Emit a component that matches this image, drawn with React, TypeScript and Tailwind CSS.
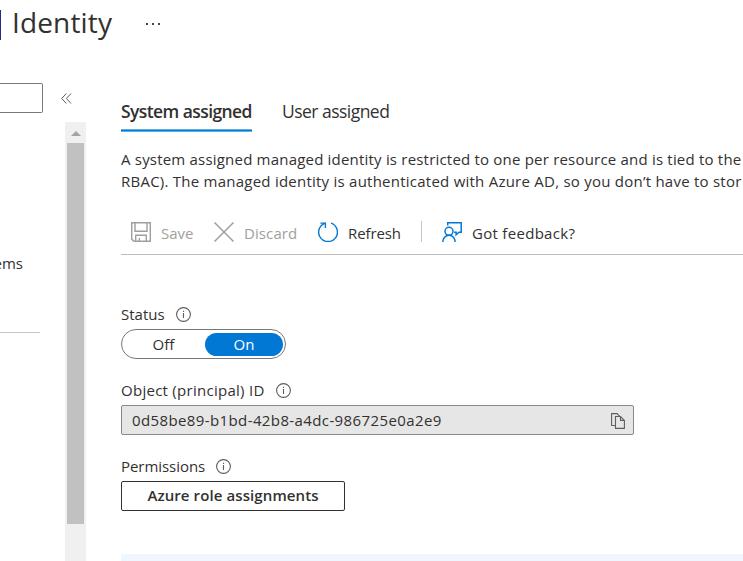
import React from 'react';

function InfoIcon() {
  return (
    <svg className="mb-px h-[15px] w-[15px] shrink-0" viewBox="0 0 15 15" fill="none" stroke="#605e5c">
      <circle cx="7.5" cy="7.5" r="6.9" strokeWidth="1.1" />
      <path d="M7.5 6v5M7.5 3.8V5" strokeWidth="1.1" />
    </svg>
  );
}

function SaveIcon() {
  return (
    <svg className="h-5 w-5" viewBox="0 0 20 20" fill="none" stroke="#a19f9d" strokeWidth="1.4">
      <path d="M.7.7h18.6v18.6H2.9L.7 17.1z" />
      <path d="M4 .7v8.6h12V.7M4.7 19.3v-6h10.6v6M8.3 19v-3" />
    </svg>
  );
}

function DiscardIcon() {
  return (
    <svg className="h-5 w-5" viewBox="0 0 20 20" fill="none" stroke="#a19f9d" strokeWidth="1.5">
      <path d="M.5.5l19 19M19.5.5l-19 19" />
    </svg>
  );
}

function RefreshIcon() {
  return (
    <svg className="h-5 w-5" viewBox="0 0 20 20" fill="none" stroke="#0078d4" strokeWidth="1.4">
      <path d="M13 1.2A9.4 9.4 0 1 1 6.8 1.3" />
      <path d="M2.4 1.1h5v5" />
    </svg>
  );
}

function FeedbackIcon() {
  return (
    <svg className="h-5 w-5" viewBox="0 0 20 20" fill="none" stroke="#0078d4" strokeWidth="1.5">
      <path d="M5.7 3.5V.8h13.5v9.5h-2.3l-2.8 2.5v-2.5h-2" />
      <circle cx="7" cy="9.3" r="4" />
      <path d="M.8 20c0-4 2.7-6.7 6.2-6.7s6.2 2.7 6.2 6.7" />
    </svg>
  );
}

function CopyIcon() {
  return (
    <svg className="mt-[2px] h-4 w-[14px]" viewBox="0 0 14 16" fill="none" stroke="#605e5c" strokeWidth="1.1">
      <path d="M4 12.5H.6V.6H6l3 3" />
      <path d="M4.5 3.5h5l3.9 3.9v8H4.5z" />
      <path d="M9.5 3.5v3.9h3.9" />
    </svg>
  );
}

function Sidebar() {
  return (
    <aside className="flex w-[86px] shrink-0 flex-col">
      <div className="flex h-[39px] items-start">
        <div className="h-[30px] w-[43px] rounded-r-[2px] border border-l-0 border-[#7a7978]" />
        <svg className="mt-[10px] ml-[18px] h-[11px] w-[11px]" viewBox="0 0 11 11" fill="none" stroke="#605e5c">
          <path d="M5.3.5l-4.6 5 4.6 5M10 .5l-4.6 5 4.6 5" />
        </svg>
      </div>
      <div className="flex flex-1 justify-between">
        <div className="w-10 pt-[130px]">
          <div className="flex h-[22px] w-[23px] justify-end leading-[22px]">ems</div>
          <div className="mt-[58px] h-px bg-[#c8c6c4]" />
        </div>
        <div className="flex w-[21px] flex-col items-center bg-[#f0f0f0]">
          <div className="flex h-[21px] items-center pt-[2px]">
            <svg className="h-[5px] w-[10px]" viewBox="0 0 10 5" fill="#a3a3a3">
              <path d="M5 0l5 5H0z" />
            </svg>
          </div>
          <div className="h-[381px] w-[17px] bg-[#c1c1c1]" />
        </div>
      </div>
    </aside>
  );
}

export default function App() {
  return (
    <div className="flex h-[561px] w-[743px] flex-col overflow-hidden bg-white font-['Open_Sans','Noto_Sans',sans-serif] text-[15px] whitespace-nowrap text-[#323130]">
      <header className="flex h-[83px] items-start">
        <div className="mt-[10px] h-[30px] w-px bg-[#2b2b86]" />
        <h1 className="ml-[11px] w-[134px] text-[28px] leading-[44px] tracking-[0.15px]">Identity</h1>
        <div className="mt-[23px] flex gap-1">
          <i className="h-[2px] w-[2px] bg-[#484644]" />
          <i className="h-[2px] w-[2px] bg-[#484644]" />
          <i className="h-[2px] w-[2px] bg-[#484644]" />
        </div>
      </header>
      <div className="flex min-h-0 flex-1">
        <Sidebar />
        <main className="ml-[35px] flex min-w-0 flex-1 flex-col">
          <nav className="flex h-[49px] shrink-0 items-stretch gap-[30px] pt-[15px] text-[17.5px] leading-[26px]">
            <div className="flex w-[131px] flex-col justify-between">
              <span className="font-semibold tracking-[-0.58px]">System assigned</span>
              <div className="h-[3px] border-y border-[#62aee7] bg-[#0078d4]" />
            </div>
            <span className="tracking-[-0.53px]">User assigned</span>
          </nav>
          <div className="mt-[16px] h-[45px] overflow-hidden leading-[22px]">
            <p className="tracking-[0.2px]">A system assigned managed identity is restricted to one per resource and is tied to the</p>
            <p className="tracking-[0.24px]">RBAC). The managed identity is authenticated with Azure AD, so you don’t have to stor</p>
          </div>
          <div className="mt-[17px] flex h-[45px] shrink-0 items-center border-b border-[#bebbb8] pl-[10px]">
            <div className="flex w-[83px] items-center gap-[10px] text-[#a19f9d]"><SaveIcon /><span className="pt-[2px]">Save</span></div>
            <div className="flex w-[104px] items-center gap-[10px] text-[#a19f9d]"><DiscardIcon /><span className="pt-[2px] tracking-[0.1px]">Discard</span></div>
            <div className="flex w-[103px] items-center gap-[10px]"><RefreshIcon /><span className="pt-[2px] tracking-[-0.1px]">Refresh</span></div>
            <div className="mb-[2px] h-[21px] w-px bg-[#c8c6c4]" />
            <div className="ml-5 flex items-center gap-[10px]"><FeedbackIcon /><span className="pt-[2px] tracking-[0.3px]">Got feedback?</span></div>
          </div>
          <div className="mt-[49px] flex h-[22px] items-center leading-[22px]">
            <span className="w-[55px] pb-[2px]">Status</span><InfoIcon />
          </div>
          <div className="mt-[3px] flex h-[30px] w-[165px] shrink-0 items-center rounded-full border border-[#797775] pr-[2px]">
            <span className="w-[83px] text-center">Off</span>
            <span className="flex h-[23px] w-[78px] items-center justify-center rounded-full bg-[#0078d4] text-white">On</span>
          </div>
          <div className="mt-[21px] flex h-[22px] items-center leading-[22px]">
            <span className="w-[155px] pb-[2px] tracking-[0.27px]">Object (principal) ID</span><InfoIcon />
          </div>
          <div className="mt-[3px] flex h-[30px] w-[513px] shrink-0 items-center justify-between rounded-[2px] border border-[#8a8886] bg-[#e6e6e6] pr-[8px] pl-[10px]">
            <span className="tracking-[0.39px]">0d58be89-b1bd-42b8-a4dc-986725e0a2e9</span>
            <CopyIcon />
          </div>
          <div className="mt-[21px] flex h-[22px] items-center leading-[22px]">
            <span className="w-[95px] pb-[2px] tracking-[-0.05px]">Permissions</span><InfoIcon />
          </div>
          <button className="mt-[3px] flex h-[30px] w-[224px] shrink-0 items-center justify-center rounded-[2px] border border-[#323130] pb-[2px] font-semibold tracking-[0.1px]">
            Azure role assignments
          </button>
          <div className="mt-[43px] h-[7px] shrink-0 rounded-tl-[2px] bg-[#eff6ff]" />
        </main>
      </div>
    </div>
  );
}
